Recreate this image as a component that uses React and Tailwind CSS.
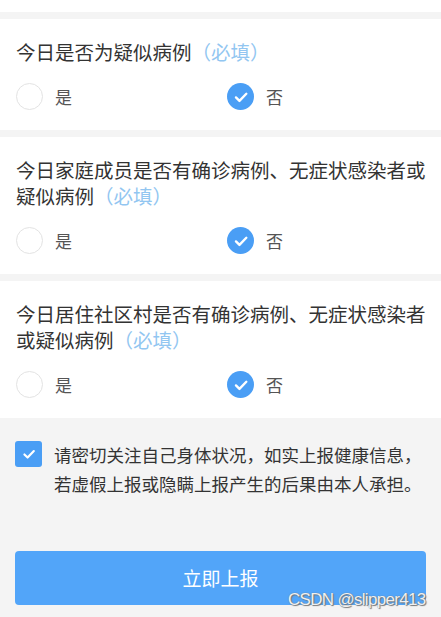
const questions = [
  { lines: ["今日是否为疑似病例"] },
  { lines: ["今日家庭成员是否有确诊病例、无症状感染者或", "疑似病例"] },
  { lines: ["今日居住社区村是否有确诊病例、无症状感染者", "或疑似病例"] },
];

const Check = ({ className }) => (
  <svg viewBox="0 0 24 24" className={className} fill="none" stroke="white" strokeWidth="2.6" strokeLinecap="round" strokeLinejoin="round">
    <path d="M6.5 12.5l3.8 3.8 7.5-7.8" />
  </svg>
);

const Question = ({ lines }) => (
  <div className="bg-white pl-4 pr-3 pt-5 pb-5">
    <div className="text-[19.5px] leading-[26px] text-[#333]">
      {lines.map((line, i) => (
        <div key={i} className="h-[26px] whitespace-nowrap">
          {line}
          {i === lines.length - 1 && <span className="text-[#92c6f1]">（必填）</span>}
        </div>
      ))}
    </div>
    <div className="mt-[18px] flex items-center text-[17px] text-[#555]">
      <div className="flex w-[211px] items-center">
        <span className="h-[27px] w-[27px] rounded-full border-[1.5px] border-[#e3e3e3] bg-white" />
        <span className="ml-3">是</span>
      </div>
      <div className="flex items-center">
        <span className="flex h-[27px] w-[27px] items-center justify-center rounded-full bg-[#4a9ef5]">
          <Check className="h-[22px] w-[22px]" />
        </span>
        <span className="ml-3">否</span>
      </div>
    </div>
  </div>
);

export default function App() {
  return (
    <div
      className="relative flex h-[617px] w-[441px] flex-col gap-[7px] overflow-hidden bg-[#f4f4f4]"
      style={{ fontFamily: '"Noto Sans CJK SC", "Noto Sans", sans-serif' }}
    >
      <div className="h-3 bg-white" />
      <div className="flex flex-col gap-[7px]">
        {questions.map((q, i) => (
          <Question key={i} lines={q.lines} />
        ))}
      </div>

      <div className="flex items-start px-[15px] pt-[15px]">
        <span className="mt-[1px] flex h-[26px] w-[27px] shrink-0 items-center justify-center rounded-[3px] bg-[#4a9ef5]">
          <Check className="h-[20px] w-[20px]" />
        </span>
        <p className="ml-3 text-[17.5px] leading-[29px] text-[#333]">
          请密切关注自己身体状况，如实上报健康信息，
          <br />
          若虚假上报或隐瞒上报产生的后果由本人承担。
        </p>
      </div>

      <div className="mt-[46px] px-[15px]">
        <button className="flex h-[54px] w-full items-center justify-center rounded-[4px] bg-[#52a5f9] text-[19px] text-white">
          立即上报
        </button>
      </div>

      <span
        className="absolute left-[288px] top-[589px] text-[17px] leading-[22px] tracking-[-0.7px] text-white/90 [text-shadow:0_0_1px_#666,1px_1px_1px_#777]"
        style={{ fontFamily: '"Liberation Sans", Arial, sans-serif' }}
      >
        CSDN @slipper413
      </span>
    </div>
  );
}
